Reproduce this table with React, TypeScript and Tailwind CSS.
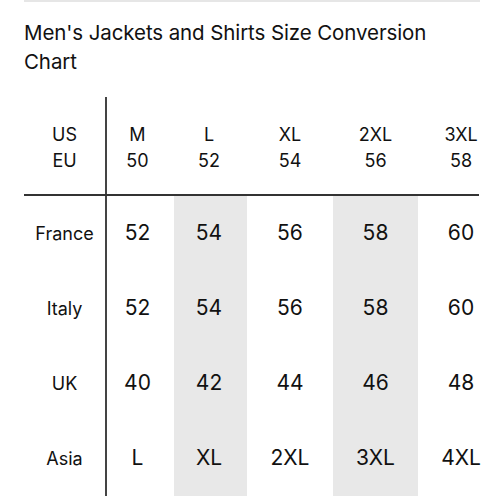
const sizes = [
  { us: 'M', eu: '50' },
  { us: 'L', eu: '52' },
  { us: 'XL', eu: '54' },
  { us: '2XL', eu: '56' },
  { us: '3XL', eu: '58' },
];

const rows = [
  { label: 'France', values: ['52', '54', '56', '58', '60'] },
  { label: 'Italy', values: ['52', '54', '56', '58', '60'] },
  { label: 'UK', values: ['40', '42', '44', '46', '48'] },
  { label: 'Asia', values: ['L', 'XL', '2XL', '3XL', '4XL'] },
];

// column widths follow the chart; L and 2XL columns are shaded
const colClass = [
  'w-[67px] pr-[6px]',
  'w-[73px] pr-[3px]',
  'w-[86px]',
  'w-[85px]',
  'w-[60px] pl-[26px]',
];
const shaded = [false, true, false, true, false];

export default function App() {
  return (
    <div className="w-[494px] h-[500px] bg-white px-[24px] text-[#111] font-['Inter',sans-serif] overflow-hidden">
      <div className="h-[1.5px] w-[456px] bg-[#e6e6e6]" />
      <h1 className="mt-[16px] text-[20.5px] leading-[29px] font-normal tracking-[-0.1px]">
        Men's Jackets and Shirts Size Conversion Chart
      </h1>

      <div className="mt-[21px] w-[455px]">
        {/* header */}
        <div className="flex h-[99px] border-b-2 border-[#333]">
          <div className="w-[83px] border-r-2 border-[#444] flex flex-col items-center justify-center text-[18px] leading-[26px] pt-[5px]">
            <span>US</span>
            <span>EU</span>
          </div>
          {sizes.map((s, i) => (
            <div
              key={s.us}
              className={`${colClass[i]} flex flex-col items-center justify-center text-[18px] leading-[26px] pt-[5px]`}
            >
              <span>{s.us}</span>
              <span>{s.eu}</span>
            </div>
          ))}
        </div>

        {/* body */}
        {rows.map((r) => (
          <div key={r.label} className="flex h-[75px]">
            <div className="w-[83px] border-r-2 border-[#444] flex items-center justify-center text-[18px]">
              {r.label}
            </div>
            {r.values.map((v, i) => (
              <div
                key={i}
                className={`${colClass[i]} ${shaded[i] ? 'bg-[#e8e8e8]' : ''} flex items-center justify-center text-[21px]`}
              >
                {v}
              </div>
            ))}
          </div>
        ))}
      </div>
    </div>
  );
}
